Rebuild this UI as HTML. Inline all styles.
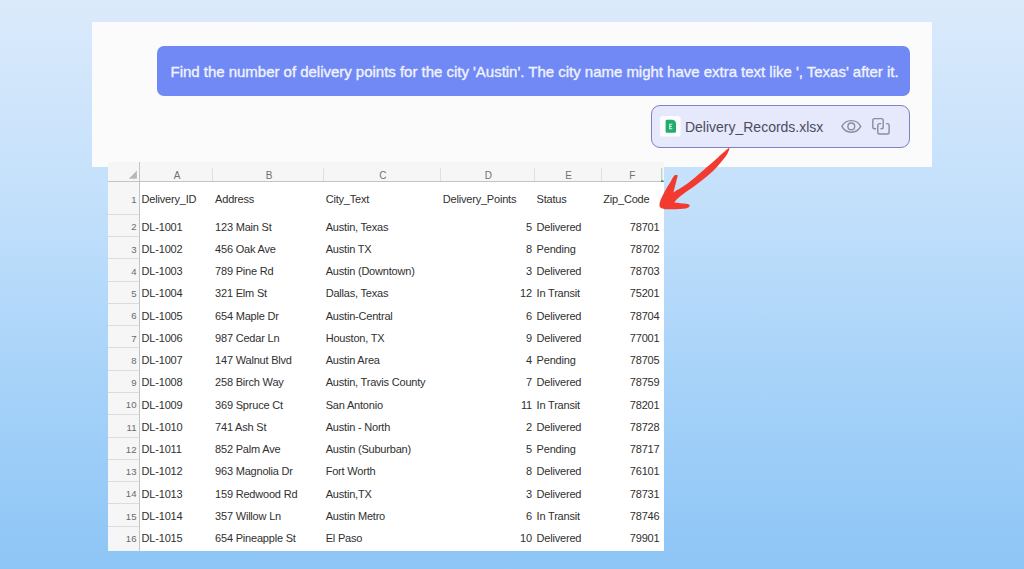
<!DOCTYPE html>
<html><head><meta charset="utf-8">
<style>
*{margin:0;padding:0;box-sizing:border-box}
html,body{width:1024px;height:569px;overflow:hidden}
body{position:relative;font-family:"Liberation Sans",sans-serif;
 background:linear-gradient(180deg,#dbeafb 0%,#c3e0fb 35%,#a8d3f9 65%,#8dc5f6 100%);}
#panel{position:absolute;left:92px;top:22px;width:840px;height:144.8px;background:#fbfbfc}
#bubble{position:absolute;left:156.5px;top:46.3px;width:753.5px;height:50.2px;border-radius:7px;background:#7089f5;
 color:#f0f3ff;font-size:15px;line-height:51px;-webkit-text-stroke:0.35px #f0f3ff;padding-left:14px;white-space:nowrap;letter-spacing:-0.02px}
#chip{position:absolute;left:650.8px;top:105.4px;width:259.4px;height:42.2px;border-radius:9px;background:#e6e8fb;border:1.5px solid #7d82c4}
#chip .name{position:absolute;left:33.1px;top:1.3px;line-height:39px;font-size:14px;color:#4b4d5c}
#sheet{position:absolute;left:108px;top:162px;width:556px;height:389px;background:#fff;overflow:hidden}
#sheet .top{position:absolute;left:0;top:0;width:556px;height:19.3px;background:#f6f6f6}
#sheet .left{position:absolute;left:0;top:0;width:31.3px;height:389px;background:#f6f6f6}
#sheet .hline{position:absolute;left:0;top:18.8px;width:556px;height:1px;background:#c4c4c4}
#sheet .vline{position:absolute;left:30.8px;top:0;width:1px;height:389px;background:#c4c4c4}
.ch{position:absolute;top:6.6px;height:13px;line-height:13px;text-align:center;font-size:10px;color:#707070;padding-left:2px}
.vd{position:absolute;top:6px;width:1px;height:13px;background:#e0e0e0}
.rn{position:absolute;left:0;width:28.5px;text-align:right;font-size:9.6px;color:#6a6a6a;padding-top:1.9px}
.hd{position:absolute;left:0;width:31px;height:1px;background:#dcdcdc}
.c{position:absolute;font-size:11px;color:#303030;white-space:nowrap;padding-left:2.3px;padding-top:1.2px;letter-spacing:-0.2px}
.c.h1{padding-top:2px}.rn.h1{padding-top:2.2px}
.c.r{text-align:right;padding-left:0;padding-right:2.4px}
</style></head><body>
<div id="panel"></div>
<div id="bubble">Find the number of delivery points for the city 'Austin'. The city name might have extra text like ', Texas' after it.</div>
<div id="chip"><div class="name">Delivery_Records.xlsx</div></div>
<div id="sheet">
<div class="top"></div><div class="left"></div><div class="hline"></div><div class="vline"></div>
<svg style="position:absolute;left:0;top:0" width="556" height="30"><path d="M20.8 16.7 L28.9 16.7 L28.9 8.4 Z" fill="#b8b8b8"/><rect x="553.4" y="6" width="0.8" height="13" fill="#8fc2a6"/><rect x="553" y="18.5" width="2.5" height="1.4" fill="#2b7a52"/></svg>
<div class="ch" style="left:31.3px;width:73.5px">A</div>
<div class="ch" style="left:104.8px;width:110.6px">B</div>
<div class="ch" style="left:215.4px;width:117.1px">C</div>
<div class="ch" style="left:332.5px;width:93.8px">D</div>
<div class="ch" style="left:426.3px;width:66.7px">E</div>
<div class="ch" style="left:493.0px;width:60.8px">F</div>
<div class="vd" style="left:104.3px"></div>
<div class="vd" style="left:214.9px"></div>
<div class="vd" style="left:332.0px"></div>
<div class="vd" style="left:425.8px"></div>
<div class="vd" style="left:492.5px"></div>
<div class="rn h1" style="top:19.3px;height:33.1px;line-height:33.1px">1</div>
<div class="hd" style="top:51.9px"></div>
<div class="rn" style="top:52.4px;height:22.26px;line-height:22.26px">2</div>
<div class="hd" style="top:74.16px"></div>
<div class="rn" style="top:74.66px;height:22.26px;line-height:22.26px">3</div>
<div class="hd" style="top:96.42px"></div>
<div class="rn" style="top:96.92px;height:22.26px;line-height:22.26px">4</div>
<div class="hd" style="top:118.68px"></div>
<div class="rn" style="top:119.18px;height:22.26px;line-height:22.26px">5</div>
<div class="hd" style="top:140.94px"></div>
<div class="rn" style="top:141.44px;height:22.26px;line-height:22.26px">6</div>
<div class="hd" style="top:163.2px"></div>
<div class="rn" style="top:163.7px;height:22.26px;line-height:22.26px">7</div>
<div class="hd" style="top:185.46px"></div>
<div class="rn" style="top:185.96px;height:22.26px;line-height:22.26px">8</div>
<div class="hd" style="top:207.72px"></div>
<div class="rn" style="top:208.22px;height:22.26px;line-height:22.26px">9</div>
<div class="hd" style="top:229.98px"></div>
<div class="rn" style="top:230.48px;height:22.26px;line-height:22.26px">10</div>
<div class="hd" style="top:252.24px"></div>
<div class="rn" style="top:252.74px;height:22.26px;line-height:22.26px">11</div>
<div class="hd" style="top:274.5px"></div>
<div class="rn" style="top:275.0px;height:22.26px;line-height:22.26px">12</div>
<div class="hd" style="top:296.76px"></div>
<div class="rn" style="top:297.26px;height:22.26px;line-height:22.26px">13</div>
<div class="hd" style="top:319.02px"></div>
<div class="rn" style="top:319.52px;height:22.26px;line-height:22.26px">14</div>
<div class="hd" style="top:341.28px"></div>
<div class="rn" style="top:341.78px;height:22.26px;line-height:22.26px">15</div>
<div class="hd" style="top:363.54px"></div>
<div class="rn" style="top:364.04px;height:22.26px;line-height:22.26px">16</div>
<div class="c h1" style="left:31.3px;width:73.5px;top:19.3px;height:33.1px;line-height:33.1px">Delivery_ID</div>
<div class="c h1" style="left:104.8px;width:110.6px;top:19.3px;height:33.1px;line-height:33.1px">Address</div>
<div class="c h1" style="left:215.4px;width:117.1px;top:19.3px;height:33.1px;line-height:33.1px">City_Text</div>
<div class="c h1" style="left:332.5px;width:93.8px;top:19.3px;height:33.1px;line-height:33.1px">Delivery_Points</div>
<div class="c h1" style="left:426.3px;width:66.7px;top:19.3px;height:33.1px;line-height:33.1px">Status</div>
<div class="c h1" style="left:493.0px;width:60.8px;top:19.3px;height:33.1px;line-height:33.1px">Zip_Code</div>
<div class="c" style="left:31.3px;width:73.5px;top:52.4px;height:22.26px;line-height:22.26px">DL-1001</div>
<div class="c" style="left:104.8px;width:110.6px;top:52.4px;height:22.26px;line-height:22.26px">123 Main St</div>
<div class="c" style="left:215.4px;width:117.1px;top:52.4px;height:22.26px;line-height:22.26px">Austin, Texas</div>
<div class="c r" style="left:332.5px;width:93.8px;top:52.4px;height:22.26px;line-height:22.26px">5</div>
<div class="c" style="left:426.3px;width:66.7px;top:52.4px;height:22.26px;line-height:22.26px">Delivered</div>
<div class="c r" style="left:493.0px;width:60.8px;top:52.4px;height:22.26px;line-height:22.26px">78701</div>
<div class="c" style="left:31.3px;width:73.5px;top:74.66px;height:22.26px;line-height:22.26px">DL-1002</div>
<div class="c" style="left:104.8px;width:110.6px;top:74.66px;height:22.26px;line-height:22.26px">456 Oak Ave</div>
<div class="c" style="left:215.4px;width:117.1px;top:74.66px;height:22.26px;line-height:22.26px">Austin TX</div>
<div class="c r" style="left:332.5px;width:93.8px;top:74.66px;height:22.26px;line-height:22.26px">8</div>
<div class="c" style="left:426.3px;width:66.7px;top:74.66px;height:22.26px;line-height:22.26px">Pending</div>
<div class="c r" style="left:493.0px;width:60.8px;top:74.66px;height:22.26px;line-height:22.26px">78702</div>
<div class="c" style="left:31.3px;width:73.5px;top:96.92px;height:22.26px;line-height:22.26px">DL-1003</div>
<div class="c" style="left:104.8px;width:110.6px;top:96.92px;height:22.26px;line-height:22.26px">789 Pine Rd</div>
<div class="c" style="left:215.4px;width:117.1px;top:96.92px;height:22.26px;line-height:22.26px">Austin (Downtown)</div>
<div class="c r" style="left:332.5px;width:93.8px;top:96.92px;height:22.26px;line-height:22.26px">3</div>
<div class="c" style="left:426.3px;width:66.7px;top:96.92px;height:22.26px;line-height:22.26px">Delivered</div>
<div class="c r" style="left:493.0px;width:60.8px;top:96.92px;height:22.26px;line-height:22.26px">78703</div>
<div class="c" style="left:31.3px;width:73.5px;top:119.18px;height:22.26px;line-height:22.26px">DL-1004</div>
<div class="c" style="left:104.8px;width:110.6px;top:119.18px;height:22.26px;line-height:22.26px">321 Elm St</div>
<div class="c" style="left:215.4px;width:117.1px;top:119.18px;height:22.26px;line-height:22.26px">Dallas, Texas</div>
<div class="c r" style="left:332.5px;width:93.8px;top:119.18px;height:22.26px;line-height:22.26px">12</div>
<div class="c" style="left:426.3px;width:66.7px;top:119.18px;height:22.26px;line-height:22.26px">In Transit</div>
<div class="c r" style="left:493.0px;width:60.8px;top:119.18px;height:22.26px;line-height:22.26px">75201</div>
<div class="c" style="left:31.3px;width:73.5px;top:141.44px;height:22.26px;line-height:22.26px">DL-1005</div>
<div class="c" style="left:104.8px;width:110.6px;top:141.44px;height:22.26px;line-height:22.26px">654 Maple Dr</div>
<div class="c" style="left:215.4px;width:117.1px;top:141.44px;height:22.26px;line-height:22.26px">Austin-Central</div>
<div class="c r" style="left:332.5px;width:93.8px;top:141.44px;height:22.26px;line-height:22.26px">6</div>
<div class="c" style="left:426.3px;width:66.7px;top:141.44px;height:22.26px;line-height:22.26px">Delivered</div>
<div class="c r" style="left:493.0px;width:60.8px;top:141.44px;height:22.26px;line-height:22.26px">78704</div>
<div class="c" style="left:31.3px;width:73.5px;top:163.7px;height:22.26px;line-height:22.26px">DL-1006</div>
<div class="c" style="left:104.8px;width:110.6px;top:163.7px;height:22.26px;line-height:22.26px">987 Cedar Ln</div>
<div class="c" style="left:215.4px;width:117.1px;top:163.7px;height:22.26px;line-height:22.26px">Houston, TX</div>
<div class="c r" style="left:332.5px;width:93.8px;top:163.7px;height:22.26px;line-height:22.26px">9</div>
<div class="c" style="left:426.3px;width:66.7px;top:163.7px;height:22.26px;line-height:22.26px">Delivered</div>
<div class="c r" style="left:493.0px;width:60.8px;top:163.7px;height:22.26px;line-height:22.26px">77001</div>
<div class="c" style="left:31.3px;width:73.5px;top:185.96px;height:22.26px;line-height:22.26px">DL-1007</div>
<div class="c" style="left:104.8px;width:110.6px;top:185.96px;height:22.26px;line-height:22.26px">147 Walnut Blvd</div>
<div class="c" style="left:215.4px;width:117.1px;top:185.96px;height:22.26px;line-height:22.26px">Austin Area</div>
<div class="c r" style="left:332.5px;width:93.8px;top:185.96px;height:22.26px;line-height:22.26px">4</div>
<div class="c" style="left:426.3px;width:66.7px;top:185.96px;height:22.26px;line-height:22.26px">Pending</div>
<div class="c r" style="left:493.0px;width:60.8px;top:185.96px;height:22.26px;line-height:22.26px">78705</div>
<div class="c" style="left:31.3px;width:73.5px;top:208.22px;height:22.26px;line-height:22.26px">DL-1008</div>
<div class="c" style="left:104.8px;width:110.6px;top:208.22px;height:22.26px;line-height:22.26px">258 Birch Way</div>
<div class="c" style="left:215.4px;width:117.1px;top:208.22px;height:22.26px;line-height:22.26px">Austin, Travis County</div>
<div class="c r" style="left:332.5px;width:93.8px;top:208.22px;height:22.26px;line-height:22.26px">7</div>
<div class="c" style="left:426.3px;width:66.7px;top:208.22px;height:22.26px;line-height:22.26px">Delivered</div>
<div class="c r" style="left:493.0px;width:60.8px;top:208.22px;height:22.26px;line-height:22.26px">78759</div>
<div class="c" style="left:31.3px;width:73.5px;top:230.48px;height:22.26px;line-height:22.26px">DL-1009</div>
<div class="c" style="left:104.8px;width:110.6px;top:230.48px;height:22.26px;line-height:22.26px">369 Spruce Ct</div>
<div class="c" style="left:215.4px;width:117.1px;top:230.48px;height:22.26px;line-height:22.26px">San Antonio</div>
<div class="c r" style="left:332.5px;width:93.8px;top:230.48px;height:22.26px;line-height:22.26px">11</div>
<div class="c" style="left:426.3px;width:66.7px;top:230.48px;height:22.26px;line-height:22.26px">In Transit</div>
<div class="c r" style="left:493.0px;width:60.8px;top:230.48px;height:22.26px;line-height:22.26px">78201</div>
<div class="c" style="left:31.3px;width:73.5px;top:252.74px;height:22.26px;line-height:22.26px">DL-1010</div>
<div class="c" style="left:104.8px;width:110.6px;top:252.74px;height:22.26px;line-height:22.26px">741 Ash St</div>
<div class="c" style="left:215.4px;width:117.1px;top:252.74px;height:22.26px;line-height:22.26px">Austin - North</div>
<div class="c r" style="left:332.5px;width:93.8px;top:252.74px;height:22.26px;line-height:22.26px">2</div>
<div class="c" style="left:426.3px;width:66.7px;top:252.74px;height:22.26px;line-height:22.26px">Delivered</div>
<div class="c r" style="left:493.0px;width:60.8px;top:252.74px;height:22.26px;line-height:22.26px">78728</div>
<div class="c" style="left:31.3px;width:73.5px;top:275.0px;height:22.26px;line-height:22.26px">DL-1011</div>
<div class="c" style="left:104.8px;width:110.6px;top:275.0px;height:22.26px;line-height:22.26px">852 Palm Ave</div>
<div class="c" style="left:215.4px;width:117.1px;top:275.0px;height:22.26px;line-height:22.26px">Austin (Suburban)</div>
<div class="c r" style="left:332.5px;width:93.8px;top:275.0px;height:22.26px;line-height:22.26px">5</div>
<div class="c" style="left:426.3px;width:66.7px;top:275.0px;height:22.26px;line-height:22.26px">Pending</div>
<div class="c r" style="left:493.0px;width:60.8px;top:275.0px;height:22.26px;line-height:22.26px">78717</div>
<div class="c" style="left:31.3px;width:73.5px;top:297.26px;height:22.26px;line-height:22.26px">DL-1012</div>
<div class="c" style="left:104.8px;width:110.6px;top:297.26px;height:22.26px;line-height:22.26px">963 Magnolia Dr</div>
<div class="c" style="left:215.4px;width:117.1px;top:297.26px;height:22.26px;line-height:22.26px">Fort Worth</div>
<div class="c r" style="left:332.5px;width:93.8px;top:297.26px;height:22.26px;line-height:22.26px">8</div>
<div class="c" style="left:426.3px;width:66.7px;top:297.26px;height:22.26px;line-height:22.26px">Delivered</div>
<div class="c r" style="left:493.0px;width:60.8px;top:297.26px;height:22.26px;line-height:22.26px">76101</div>
<div class="c" style="left:31.3px;width:73.5px;top:319.52px;height:22.26px;line-height:22.26px">DL-1013</div>
<div class="c" style="left:104.8px;width:110.6px;top:319.52px;height:22.26px;line-height:22.26px">159 Redwood Rd</div>
<div class="c" style="left:215.4px;width:117.1px;top:319.52px;height:22.26px;line-height:22.26px">Austin,TX</div>
<div class="c r" style="left:332.5px;width:93.8px;top:319.52px;height:22.26px;line-height:22.26px">3</div>
<div class="c" style="left:426.3px;width:66.7px;top:319.52px;height:22.26px;line-height:22.26px">Delivered</div>
<div class="c r" style="left:493.0px;width:60.8px;top:319.52px;height:22.26px;line-height:22.26px">78731</div>
<div class="c" style="left:31.3px;width:73.5px;top:341.78px;height:22.26px;line-height:22.26px">DL-1014</div>
<div class="c" style="left:104.8px;width:110.6px;top:341.78px;height:22.26px;line-height:22.26px">357 Willow Ln</div>
<div class="c" style="left:215.4px;width:117.1px;top:341.78px;height:22.26px;line-height:22.26px">Austin Metro</div>
<div class="c r" style="left:332.5px;width:93.8px;top:341.78px;height:22.26px;line-height:22.26px">6</div>
<div class="c" style="left:426.3px;width:66.7px;top:341.78px;height:22.26px;line-height:22.26px">In Transit</div>
<div class="c r" style="left:493.0px;width:60.8px;top:341.78px;height:22.26px;line-height:22.26px">78746</div>
<div class="c" style="left:31.3px;width:73.5px;top:364.04px;height:22.26px;line-height:22.26px">DL-1015</div>
<div class="c" style="left:104.8px;width:110.6px;top:364.04px;height:22.26px;line-height:22.26px">654 Pineapple St</div>
<div class="c" style="left:215.4px;width:117.1px;top:364.04px;height:22.26px;line-height:22.26px">El Paso</div>
<div class="c r" style="left:332.5px;width:93.8px;top:364.04px;height:22.26px;line-height:22.26px">10</div>
<div class="c" style="left:426.3px;width:66.7px;top:364.04px;height:22.26px;line-height:22.26px">Delivered</div>
<div class="c r" style="left:493.0px;width:60.8px;top:364.04px;height:22.26px;line-height:22.26px">79901</div>
</div>

<svg id="ov" width="1024" height="569" viewBox="0 0 1024 569" style="position:absolute;left:0;top:0">
<rect x="660" y="116" width="20.6" height="20.5" rx="2.5" fill="#fdfdff"/>
<path d="M665.6 121.2 Q665.6 119.8 667 119.8 L672.3 119.8 Q676 120.3 676 123.8 L676 131.3 Q676 132.8 674.5 132.8 L667 132.8 Q665.6 132.8 665.6 131.3 Z" fill="#22ad6e"/>
<path d="M669.2 124.3 H672.3 M669.7 124.3 V128.8 M669.2 126.5 H671.9 M669.2 128.8 H672.3" stroke="#d9f5e6" stroke-width="1" fill="none"/>
<path d="M841.9 126.4 C844.3 121.6 847.6 120.6 851.3 120.6 C855 120.6 858.3 121.6 860.7 126.4 C858.3 131.2 855 132.2 851.3 132.2 C847.6 132.2 844.3 131.2 841.9 126.4 Z" fill="none" stroke="#8b8d9c" stroke-width="1.4"/>
<circle cx="851.3" cy="126.4" r="3.4" fill="none" stroke="#8b8d9c" stroke-width="1.4"/>
<path d="M875.6 128.8 H874.6 Q872.8 128.8 872.8 127 V120.4 Q872.8 118.6 874.6 118.6 H881.4 Q883.2 118.6 883.2 120.4 V127 Q883.2 128.8 881.4 128.8 H881" fill="none" stroke="#8b8d9c" stroke-width="1.4" stroke-linecap="round"/>
<path d="M880.7 123.6 H879.6 Q877.8 123.6 877.8 125.4 V132.2 Q877.8 134 879.6 134 H887.3 Q889.1 134 889.1 132.2 V125.4 Q889.1 123.6 887.3 123.6 H886.6" fill="none" stroke="#8b8d9c" stroke-width="1.4" stroke-linecap="round"/>
<path d="M729.5 147.3 C727.7 148.9 722.2 153.6 718.5 156.9 C714.8 160.2 711.2 163.3 707.0 166.9 C702.8 170.5 697.5 175.4 693.5 178.7 C689.5 182.0 685.9 184.6 683.0 186.6 C680.1 188.6 677.9 189.6 676.3 190.6 C674.7 191.6 673.9 192.3 673.4 192.6 C673.8 191.2 674.9 186.6 675.6 184.0 C676.3 181.4 677.1 178.4 677.4 177.0 C677.7 175.6 677.9 175.7 677.6 175.4 C677.3 175.1 676.5 174.9 675.8 175.1 C675.1 175.3 674.6 175.0 673.6 176.4 C672.6 177.8 670.9 181.1 669.5 183.5 C668.1 185.9 666.4 188.3 665.0 190.9 C663.6 193.5 661.9 196.8 661.0 199.0 C660.1 201.2 659.6 202.9 659.5 204.3 C659.4 205.7 659.6 206.8 660.4 207.6 C661.1 208.4 662.4 208.6 664.0 208.9 C665.6 209.2 666.7 209.3 670.0 209.3 C673.3 209.3 680.5 209.0 683.6 208.7 C686.7 208.4 687.4 208.0 688.4 207.5 C689.4 207.0 689.7 206.2 689.7 205.6 C689.7 205.0 689.0 204.5 688.3 204.2 C687.6 203.9 687.0 203.9 685.5 203.7 C684.0 203.5 680.9 203.1 679.0 202.9 C677.1 202.7 675.0 202.5 674.2 202.4 C674.8 201.8 676.3 199.8 677.7 198.5 C679.1 197.2 680.0 196.4 682.6 194.4 C685.2 192.4 689.9 189.4 693.6 186.7 C697.3 184.0 701.0 181.2 704.6 178.3 C708.2 175.4 712.4 171.7 715.0 169.1 C717.6 166.5 718.6 165.1 720.5 162.8 C722.4 160.6 724.9 157.8 726.3 155.6 C727.7 153.4 728.6 151.2 729.1 149.8 C729.6 148.4 729.4 147.7 729.5 147.3 Z" fill="#f23b2e"/>
</svg>
</body></html>
